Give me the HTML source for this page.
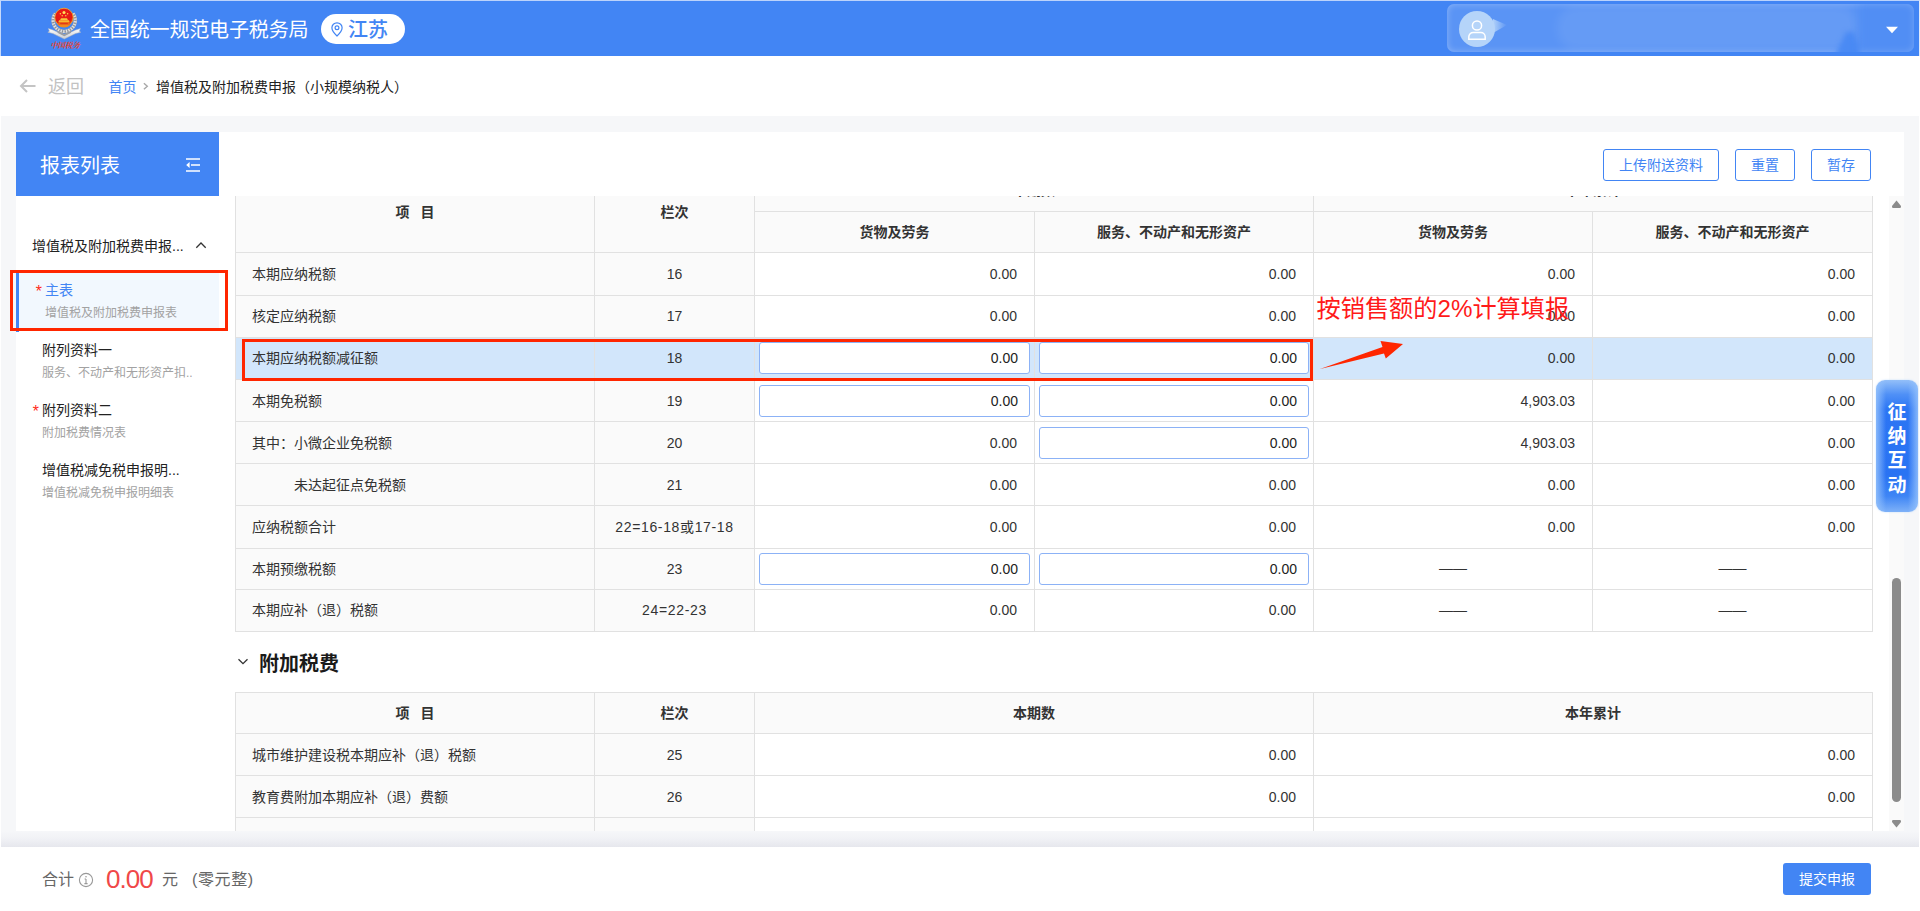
<!DOCTYPE html>
<html lang="zh-CN">
<head>
<meta charset="utf-8">
<title>增值税及附加税费申报（小规模纳税人）</title>
<style>
*{box-sizing:border-box;margin:0;padding:0}
html,body{width:1920px;height:911px;overflow:hidden;background:#fff}
body{position:relative;font-family:"Liberation Sans","Noto Sans CJK SC",sans-serif;font-size:14px;color:#333;line-height:1}
.abs{position:absolute}
/* header */
#hdr{position:absolute;left:0;top:0;width:1920px;height:56px;background:#4285f4;border-top:1px solid #bcd3fb;border-left:1px solid #c6d9fb;border-right:1px solid #dfe9fb}
#title{position:absolute;left:90px;top:18px;font-size:20px;line-height:24px;color:#fff;white-space:nowrap;letter-spacing:-.15px}
#pill{position:absolute;left:321px;top:14px;width:84px;height:30px;border-radius:15px;background:#fff}
#pill span{position:absolute;left:27px;top:4px;font-size:20px;line-height:24px;color:#4285f4;font-weight:500;white-space:nowrap}
#user{position:absolute;left:1447px;top:4px;width:467px;height:48px;border-radius:7px;background:rgba(255,255,255,.13);box-shadow:inset 0 0 7px rgba(255,255,255,.3);overflow:hidden}
#avatar{position:absolute;left:1459px;top:11px;width:36px;height:36px;border-radius:50%;background:#b5d4f9}
/* breadcrumb */
#crumb{position:absolute;left:0;top:56px;width:1920px;height:60px;background:#fff}
#back{position:absolute;left:48px;top:77px;font-size:18px;line-height:20px;color:#c2c2c2;white-space:nowrap}
#home{position:absolute;left:108.500px;top:78px;font-size:14px;line-height:18px;color:#4285f4;white-space:nowrap}
#cur{position:absolute;left:156px;top:78px;font-size:14px;line-height:18px;color:#222;white-space:nowrap}
/* grey page */
#page{position:absolute;left:1px;top:116px;width:1918px;height:731px;background:#f6f7f9}
#panel{position:absolute;left:16px;top:132px;width:1888px;height:699px;background:#fff}
#sbhead{position:absolute;left:16px;top:132px;width:203px;height:64px;background:#4285f4}
#sbhead span{position:absolute;left:24px;top:22px;font-size:20px;line-height:24px;color:#fff;white-space:nowrap}
.grp{position:absolute;left:32px;top:237px;font-size:14px;line-height:18px;color:#222;white-space:nowrap}
.it{position:absolute;left:16px;width:203px;height:60px}
.it .t{position:absolute;left:26px;top:11px;font-size:14px;line-height:18px;color:#222;white-space:nowrap}
.it .s{position:absolute;left:26px;top:35px;font-size:12px;line-height:16px;color:#a2a2a2;white-space:nowrap}
.it .st{position:absolute;left:16px;top:12.500px;font-size:16px;font-style:italic;line-height:18px;color:#ff2a1a}
.it.on{background:#f2f8fe}
.it.on .t{left:29px;color:#4285f4}
.it.on .s{left:29px}
.it.on .st{left:19px}
.redbox{position:absolute;border:3px solid #ff2600}
/* buttons */
.btn{position:absolute;top:149px;height:32px;border:1px solid #4285f4;border-radius:3px;color:#4285f4;font-size:14px;line-height:30px;text-align:center;background:#fff;white-space:nowrap}
/* table */
#scroll{position:absolute;left:219px;top:196px;width:1670px;height:635px;overflow:hidden}
.row{position:absolute;left:16px;width:1638px;border-left:1px solid #e1e1e1;display:flex}
.c{border-right:1px solid #e1e1e1;border-bottom:1px solid #e1e1e1;height:100%;display:flex;align-items:center;background:#fff;white-space:nowrap;font-size:14px;color:#333;flex:none;position:relative}
.c.l{background:#fafafa;padding-left:16px}
.c.n{background:#fafafa;justify-content:center}
.c.v{justify-content:flex-end;padding-right:17px}
.c.d{justify-content:center;padding-bottom:2px}
.c.h{background:#fafafa;justify-content:center;font-weight:700;color:#333}
.w1{width:359px}.w2{width:160px}.w3{width:280px}.w4{width:279px}.w5{width:279px}.w6{width:280px}.w7{width:559px}
.w4 .inp{width:270px}
.hl .c{background:#d2e6fb}
.u .c{padding-bottom:2px}
.f{letter-spacing:.65px}
.inp{position:absolute;left:4px;width:271px;height:32px;border:1px solid #8cb2f6;border-radius:3px;background:#fff;text-align:right;padding-right:11px;line-height:30px;font-size:14px;color:#222}
#track{position:absolute;left:1889px;top:196px;width:15px;height:635px;background:#fafafa}
#thumb{position:absolute;left:1892px;top:578px;width:9px;height:224px;border-radius:4.5px;background:#8b8b8b}
/* footer */
#shadow{position:absolute;left:1px;top:831px;width:1918px;height:16px;background:linear-gradient(#f6f7f9,#f1f2f6 45%,#e6e7ed)}
#foot{position:absolute;left:0;top:847px;width:1920px;height:64px;background:#fff}
#submit{position:absolute;left:1783px;top:863px;width:88px;height:32px;border-radius:3px;background:#4285f4;color:#fff;font-size:14px;line-height:32px;text-align:center}
#widget{position:absolute;left:1876px;top:380px;width:42px;height:132px;border-radius:9px;background:linear-gradient(90deg,rgba(150,195,252,.85),rgba(150,195,252,0) 24%,rgba(150,195,252,0) 76%,rgba(150,195,252,.85)),linear-gradient(#93bff9,#4f90f6 11%,#2c75f4 22%,#2a73f3 72%,#3e85f5 88%,#7eb1f8);box-shadow:0 0 2px rgba(150,195,252,.6)}
#widget span{position:absolute;left:0;width:42px;text-align:center;color:#fff;font-weight:700;font-size:19px;line-height:20px}
</style>
</head>
<body>
<div id="hdr"></div>
<svg class="abs" style="left:46px;top:6px" width="38" height="46" viewBox="0 0 38 46">
  <defs>
    <radialGradient id="rg" cx="45%" cy="35%" r="65%"><stop offset="0" stop-color="#ee1c17"/><stop offset=".75" stop-color="#e21a14"/><stop offset="1" stop-color="#ec5a1a"/></radialGradient>
    <linearGradient id="rb" x1="0" y1="0" x2="0" y2="1"><stop offset="0" stop-color="#ffffff"/><stop offset="1" stop-color="#c9ccd1"/></linearGradient>
  </defs>
  <path d="M27 7.600 A11.100 11.100 0 1 1 9.400 7.600" fill="none" stroke="#a6a9af" stroke-width="3.600"/>
  <path d="M27 7.600 A11.100 11.100 0 1 1 9.400 7.600" fill="none" stroke="#e3e5e8" stroke-width="3" stroke-dasharray="1.200 1.500"/>
  <path d="M27 7.600 A11.100 11.100 0 1 1 9.400 7.600" fill="none" stroke="#7f838a" stroke-width="1.400" stroke-dasharray=".6 2.100" stroke-dashoffset="1"/>
  <path d="M2.400 22.600 L7 24 L18.300 29.300 L29.600 24 L34.400 22.600 L33.300 25.200 L34.800 26.200 L29.500 27.600 L18.300 33 L7 27.600 L1.800 26.200 L3.400 25.200 Z" fill="url(#rb)" stroke="#aeb2b8" stroke-width=".5"/>
  <path d="M11 24.600 L18.300 28 L25.600 24.600 L24.800 27 L18.300 30.200 L11.800 27 Z" fill="#9a9ea5"/>
  <circle cx="18" cy="11.400" r="9.200" fill="url(#rg)" stroke="#f0a52c" stroke-width=".9"/>
  <path d="M11.200 18.600 A9.200 9.200 0 0 0 24.800 18.600 Z" fill="#f08a1e"/>
  <path d="M12.600 16 H23.400 L24 18.700 H12 Z" fill="#ee6a1a"/>
  <path d="M13 14.300 H23 L23.600 16 H12.400 Z" fill="#f8b930"/>
  <path d="M15 12.300 H21 L22 14.300 H14 Z" fill="#f9c83c"/>
  <path d="M14.200 17 H21.800 V17.700 H14.200 Z" fill="#d8241a"/>
  <circle cx="18" cy="6.400" r="1.500" fill="#ffe45a"/>
  <circle cx="14.400" cy="7.700" r=".75" fill="#ffd84a"/><circle cx="21.600" cy="7.700" r=".75" fill="#ffd84a"/>
  <circle cx="16.200" cy="9.800" r=".7" fill="#ffd84a"/><circle cx="19.800" cy="9.800" r=".7" fill="#ffd84a"/>
  <text x="18.900" y="42.300" font-family="'Liberation Serif','Noto Serif CJK SC',serif" font-size="7.700" font-weight="700" font-style="italic" fill="#e8432b" text-anchor="middle" letter-spacing="-.4">中国税务</text>
</svg>
<div id="title">全国统一规范电子税务局</div>
<div id="pill">
  <svg class="abs" style="left:10px;top:8px" width="12" height="15" viewBox="0 0 12 15"><path d="M6 .8C3.100 .8 .9 3 .9 5.800c0 3.500 5.100 8.200 5.100 8.200s5.100-4.700 5.100-8.200C11.100 3 8.900 .8 6 .8z" fill="none" stroke="#4285f4" stroke-width="1.200"/><circle cx="6" cy="5.700" r="1.900" fill="none" stroke="#4285f4" stroke-width="1.200"/></svg>
  <span>江苏</span>
</div>
<div id="user">
  <div class="abs" style="left:110px;top:2px;width:300px;height:44px;border-radius:20px;background:rgba(255,255,255,.07);filter:blur(5px)"></div>
  <div class="abs" style="left:375px;top:14px;width:50px;height:40px;filter:blur(2.500px)"><div style="width:50px;height:40px;background:#4a8af4;clip-path:polygon(12px 40px,24px 14px,32px 14px,40px 40px)"></div></div>
  <div class="abs" style="left:412px;top:-4px;width:70px;height:60px;background:rgba(66,133,244,.35);filter:blur(5px)"></div>
</div>
<svg class="abs" style="left:1493px;top:14px" width="18" height="22" viewBox="0 0 18 22"><defs><linearGradient id="tl" x1="0" x2="1"><stop offset="0" stop-color="#b5d4f9" stop-opacity=".95"/><stop offset="1" stop-color="#b5d4f9" stop-opacity="0"/></linearGradient></defs><path d="M0 5 L14 11 L0 19 Z" fill="url(#tl)"/></svg>
<div id="avatar"></div>
<svg class="abs" style="left:1467px;top:19px" width="20" height="22" viewBox="0 0 20 22"><circle cx="10" cy="6.500" r="4.600" fill="none" stroke="#fff" stroke-width="1.500"/><path d="M1.800 20.300 V18 C1.800 15.300 3.800 13.600 6.200 13.600 H13.800 C16.200 13.600 18.200 15.300 18.200 18 V20.300 Z" fill="none" stroke="#fff" stroke-width="1.500"/></svg>
<svg class="abs" style="left:1885px;top:26px" width="14" height="8" viewBox="0 0 14 8"><path d="M1 .8 H13 L7 7.200 Z" fill="#fff"/></svg>

<div id="crumb"></div>
<svg class="abs" style="left:19px;top:78px" width="18" height="16" viewBox="0 0 18 16"><path d="M8 2 L2 8 L8 14 M2 8 H16.500" fill="none" stroke="#c4c4c4" stroke-width="2"/></svg>
<div id="back">返回</div>
<div id="home">首页</div>
<svg class="abs" style="left:142px;top:82px" width="8" height="10" viewBox="0 0 8 10"><path d="M1.900 1.200 L5.300 4.200 L1.900 7.200" fill="none" stroke="#a8a8a8" stroke-width="1.400"/></svg>
<div id="cur">增值税及附加税费申报（小规模纳税人）</div>

<div id="page"></div>
<div id="panel"></div>
<div id="sbhead"><span>报表列表</span>
  <svg class="abs" style="left:169px;top:25px" width="16" height="16" viewBox="0 0 16 16"><path d="M1 2 H15 M6 8 H15 M1 14 H15" stroke="#fff" stroke-width="1.500" fill="none"/><path d="M4.600 5 V11 L1.200 8 Z" fill="#fff"/></svg>
</div>
<div class="grp">增值税及附加税费申报...</div>
<svg class="abs" style="left:195px;top:241px" width="12" height="8" viewBox="0 0 12 8"><path d="M1.300 6.700 L6 2 L10.700 6.700" fill="none" stroke="#333" stroke-width="1.300"/></svg>
<div class="it on" style="top:270px"><div class="abs" style="left:0;top:0;width:3px;height:62px;background:#4285f4"></div><span class="st">*</span><span class="t">主表</span><span class="s">增值税及附加税费申报表</span></div>
<div class="it" style="top:330px"><span class="t">附列资料一</span><span class="s">服务、不动产和无形资产扣..</span></div>
<div class="it" style="top:390px"><span class="st">*</span><span class="t">附列资料二</span><span class="s">附加税费情况表</span></div>
<div class="it" style="top:450px"><span class="t">增值税减免税申报明...</span><span class="s">增值税减免税申报明细表</span></div>
<div class="redbox" style="left:10px;top:270px;width:218px;height:61px"></div>
<div class="btn" style="left:1603px;width:116px">上传附送资料</div>
<div class="btn" style="left:1735px;width:60px">重置</div>
<div class="btn" style="left:1811px;width:60px">暂存</div>
<div id="scroll">
<div class="row" style="top:-26px;height:83px;border-top:1px solid #e1e1e1"><div class="c h w1"><span style="position:relative;top:.5px">项<span style="display:inline-block;width:11px"></span>目</span></div><div class="c h w2"><span style="position:relative;top:.5px">栏次</span></div><div style="flex:none;width:559px;height:100%"><div class="c h" style="width:559px;height:41px;padding-bottom:2px">本期数</div><div style="display:flex;height:41px"><div class="c h w3">货物及劳务</div><div class="c h w4">服务、不动产和无形资产</div></div></div><div style="flex:none;width:559px;height:100%"><div class="c h" style="width:559px;height:41px;padding-bottom:2px">本年累计</div><div style="display:flex;height:41px"><div class="c h w5">货物及劳务</div><div class="c h w6">服务、不动产和无形资产</div></div></div></div>
<div class="row" style="top:57px;height:43px"><div class="c l w1">本期应纳税额</div><div class="c n w2">16</div><div class="c v w3">0.00</div><div class="c v w4">0.00</div><div class="c v w5">0.00</div><div class="c v w6">0.00</div></div>
<div class="row u" style="top:100px;height:42px"><div class="c l w1">核定应纳税额</div><div class="c n w2">17</div><div class="c v w3">0.00</div><div class="c v w4">0.00</div><div class="c v w5">0.00</div><div class="c v w6">0.00</div></div>
<div class="row hl u" style="top:142px;height:42px"><div class="c l w1">本期应纳税额减征额</div><div class="c n w2">18</div><div class="c w3"><div class="inp" style="top:4px">0.00</div></div><div class="c w4"><div class="inp" style="top:4px">0.00</div></div><div class="c v w5">0.00</div><div class="c v w6">0.00</div></div>
<div class="row" style="top:184px;height:42px"><div class="c l w1">本期免税额</div><div class="c n w2">19</div><div class="c w3"><div class="inp" style="top:5px">0.00</div></div><div class="c w4"><div class="inp" style="top:5px">0.00</div></div><div class="c v w5">4,903.03</div><div class="c v w6">0.00</div></div>
<div class="row" style="top:226px;height:42px"><div class="c l w1">其中：小微企业免税额</div><div class="c n w2">20</div><div class="c v w3">0.00</div><div class="c w4"><div class="inp" style="top:5px">0.00</div></div><div class="c v w5">4,903.03</div><div class="c v w6">0.00</div></div>
<div class="row" style="top:268px;height:42px"><div class="c l w1" style="padding-left:58px">未达起征点免税额</div><div class="c n w2">21</div><div class="c v w3">0.00</div><div class="c v w4">0.00</div><div class="c v w5">0.00</div><div class="c v w6">0.00</div></div>
<div class="row" style="top:310px;height:43px"><div class="c l w1">应纳税额合计</div><div class="c n w2 f">22=16-18或17-18</div><div class="c v w3">0.00</div><div class="c v w4">0.00</div><div class="c v w5">0.00</div><div class="c v w6">0.00</div></div>
<div class="row" style="top:353px;height:41px"><div class="c l w1">本期预缴税额</div><div class="c n w2">23</div><div class="c w3"><div class="inp" style="top:4px">0.00</div></div><div class="c w4"><div class="inp" style="top:4px">0.00</div></div><div class="c d w5">——</div><div class="c d w6">——</div></div>
<div class="row u" style="top:394px;height:42px"><div class="c l w1">本期应补（退）税额</div><div class="c n w2 f">24=22-23</div><div class="c v w3">0.00</div><div class="c v w4">0.00</div><div class="c d w5">——</div><div class="c d w6">——</div></div>
<svg class="abs" style="left:18px;top:461px" width="12" height="9" viewBox="0 0 12 9"><path d="M1.500 2.200 L6 6.700 L10.500 2.200" fill="none" stroke="#333" stroke-width="1.300"/></svg>
<div class="abs" style="left:40px;top:456px;font-size:20px;line-height:24px;font-weight:700;color:#1a1a1a;white-space:nowrap">附加税费</div>
<div class="row" style="top:496px;height:42px;border-top:1px solid #e1e1e1"><div class="c h w1">项<span style="display:inline-block;width:11px"></span>目</div><div class="c h w2">栏次</div><div class="c h w7">本期数</div><div class="c h w7">本年累计</div></div>
<div class="row" style="top:538px;height:42px"><div class="c l w1">城市维护建设税本期应补（退）税额</div><div class="c n w2">25</div><div class="c v w7">0.00</div><div class="c v w7">0.00</div></div>
<div class="row" style="top:580px;height:42px"><div class="c l w1">教育费附加本期应补（退）费额</div><div class="c n w2">26</div><div class="c v w7">0.00</div><div class="c v w7">0.00</div></div>
<div class="row" style="top:622px;height:42px"><div class="c l w1">地方教育附加本期应补（退）费额</div><div class="c n w2">27</div><div class="c v w7">0.00</div><div class="c v w7">0.00</div></div>
</div>
<div id="track"></div>
<svg class="abs" style="left:1891px;top:200px" width="11" height="9" viewBox="0 0 11 9"><path d="M5.500 .6 L10 6 Q10.300 7.900 9 7.900 H2 Q.7 7.900 1 6 Z" fill="#8b8b8b"/></svg>
<svg class="abs" style="left:1891px;top:819px" width="11" height="9" viewBox="0 0 11 9"><path d="M5.500 8.400 L10 3 Q10.300 1.100 9 1.100 H2 Q.7 1.100 1 3 Z" fill="#8b8b8b"/></svg>
<div id="thumb"></div>
<div class="redbox" style="left:242px;top:339px;width:1071px;height:42px"></div>
<div class="abs" style="left:1316.500px;top:294px;font-size:24.200px;line-height:30px;color:#ff1a1a;white-space:nowrap">按销售额的2%计算填报</div>
<svg class="abs" style="left:1316px;top:338px" width="92" height="36" viewBox="0 0 92 36"><path d="M4 31 L66.500 9 L64.500 3 L87 6 L69.800 20.500 L68 15.500 Z" fill="#ff2600"/></svg>
<div id="widget"><span style="top:22.500px">征</span><span style="top:46.500px">纳</span><span style="top:71px">互</span><span style="top:95.500px">动</span></div>

<div id="shadow"></div>
<div id="foot"></div>
<div class="abs" style="left:42px;top:870px;font-size:16px;line-height:20px;color:#666;white-space:nowrap">合计</div>
<svg class="abs" style="left:78px;top:872px" width="16" height="16" viewBox="0 0 16 16"><circle cx="8" cy="8" r="6.600" fill="none" stroke="#999" stroke-width="1.100"/><path d="M8 7 V11.600 M6.600 7 H8 M6.400 11.600 H9.600" stroke="#999" stroke-width="1.100" fill="none"/><circle cx="8" cy="4.700" r=".8" fill="#999"/></svg>
<div class="abs" style="left:106px;top:864px;font-size:26px;line-height:30px;color:#f04848;letter-spacing:-1px;white-space:nowrap">0.00</div>
<div class="abs" style="left:162px;top:870px;font-size:16px;line-height:20px;color:#666;white-space:nowrap">元</div>
<div class="abs" style="left:192px;top:870px;font-size:16px;line-height:20px;color:#666;white-space:nowrap;letter-spacing:.6px">(零元整)</div>
<div id="submit">提交申报</div>

</body>
</html>
